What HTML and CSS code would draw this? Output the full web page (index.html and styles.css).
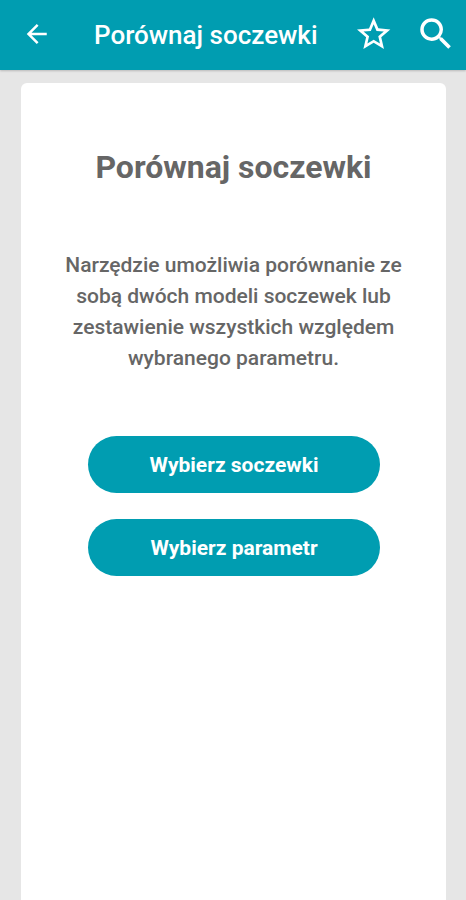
FILE: index.html
```html
<!DOCTYPE html>
<html lang="pl">
<head>
<meta charset="utf-8">
<meta name="viewport" content="width=device-width, initial-scale=1">
<title>Porównaj soczewki</title>
<link rel="stylesheet" href="styles.css">
</head>
<body>
<header class="bar">
  <button class="icon-button" type="button" aria-label="Wstecz">
    <svg width="30" height="30" viewBox="0 0 24 24" fill="currentColor"><path transform="translate(.6 0)" d="M20 10.2H7.83l5.59-5.59L12 3.2l-8 8 8 8 1.41-1.41-5.58-5.59H20v-2z"/></svg>
  </button>
  <span class="bar-title">Porównaj soczewki</span>
  <button class="icon-button" type="button" aria-label="Ulubione">
    <svg width="40" height="40" viewBox="0 0 24 24" fill="currentColor"><path transform="translate(-.2 -.6)" d="M22 9.24l-7.19-.62L12 2 9.19 8.63 2 9.24l5.46 4.73L5.82 21 12 17.27 18.18 21l-1.63-7.03L22 9.24zM12 15.4l-3.76 2.27 1-4.28-3.32-2.88 4.38-.38L12 6.1l1.71 4.04 4.38.38-3.32 2.88 1 4.28L12 15.4z"/></svg>
  </button>
  <button class="icon-button" type="button" aria-label="Szukaj">
    <svg width="42" height="42" viewBox="0 0 24 24" fill="currentColor"><path transform="translate(0 -.6)" d="M15.5 14h-.79l-.28-.27A6.47 6.47 0 0 0 16 9.5 6.5 6.5 0 1 0 9.5 16c1.61 0 3.09-.59 4.23-1.57l.27.28v.79l5 4.99L20.49 19l-4.99-5zm-6 0C7.01 14 5 11.99 5 9.5S7.01 5 9.5 5 14 7.01 14 9.5 11.99 14 9.5 14z"/></svg>
  </button>
</header>
<main class="card">
  <h1 class="title">Porównaj soczewki</h1>
  <p class="lead">Narzędzie umożliwia porównanie ze sobą dwóch modeli soczewek lub zestawienie wszystkich względem wybranego parametru.</p>
  <div class="actions">
    <button class="action" type="button">Wybierz soczewki</button>
    <button class="action" type="button">Wybierz parametr</button>
  </div>
</main>
</body>
</html>
```
FILE: styles.css
```css
* {
  box-sizing: border-box;
}

body {
  display: flex;
  flex-direction: column;
  min-height: 100vh;
  margin: 0;
  background: #e6e6e6;
  color: #666;
  font-family: Roboto, sans-serif;
}

.bar {
  display: flex;
  align-items: center;
  height: 70px;
  padding: 0 10px 0 16px;
  background: #009db1;
  color: #fff;
  box-shadow: 0 1px 2px rgba(0, 0, 0, 0.2);
}

.bar-title {
  flex: 1;
  padding-left: 38px;
  font-size: 26px;
  font-weight: 500;
  white-space: nowrap;
}

.icon-button {
  display: flex;
  align-items: center;
  justify-content: center;
  width: 40px;
  height: 48px;
  padding: 0;
  border: 0;
  background: none;
  color: inherit;
}

.icon-button + .icon-button {
  margin-left: 22px;
}

.icon-button svg {
  flex: none;
}

.card {
  flex: 1;
  margin: 13px 20px 0 21px;
  padding: 64px 40px 40px;
  border-radius: 6px 6px 0 0;
  background: #fff;
  text-align: center;
}

.title {
  margin: 0;
  font-size: 32px;
  font-weight: 700;
  line-height: 40px;
}

.lead {
  margin: 63px 0 0;
  font-size: 21px;
  font-weight: 500;
  line-height: 31px;
}

.actions {
  display: flex;
  flex-direction: column;
  gap: 26px;
  margin: 62px 26px 0 27px;
}

.action {
  height: 57px;
  padding: 0;
  border: 0;
  border-radius: 29px;
  background: #009db1;
  color: #fff;
  font-family: inherit;
  font-size: 21px;
  font-weight: 700;
}
```
